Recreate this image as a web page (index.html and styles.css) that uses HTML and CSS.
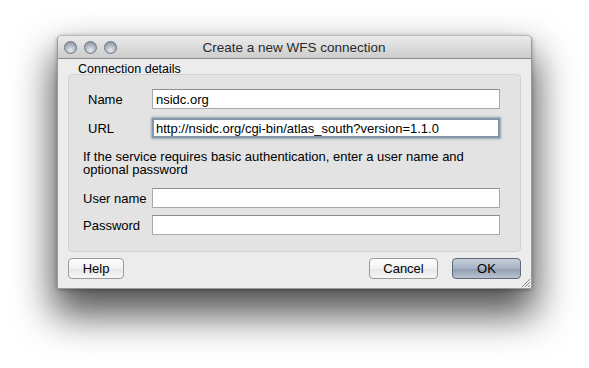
FILE: index.html
```html
<!DOCTYPE html>
<html lang="en">
<head>
  <meta charset="UTF-8" />
  <title>Create a new WFS connection</title>
  <link rel="stylesheet" href="styles.css">
</head>
<body>

  <div class="window">
    <div class="titlebar">
      <div class="lights">
        <span class="light"></span>
        <span class="light"></span>
        <span class="light"></span>
      </div>
      <div class="title">Create a new WFS connection</div>
    </div>

    <div class="content">
      <div class="legend">Connection details</div>
      <div class="group">
        <div class="form top">
          <label>Name</label>
          <div class="field">nsidc.org</div>
          <label>URL</label>
          <div class="field focus">http://nsidc.org/cgi-bin/atlas_south?version=1.1.0</div>
        </div>

        <p class="hint">If the service requires basic authentication, enter a user name and optional password</p>

        <div class="form bottom">
          <label>User name</label>
          <div class="field"></div>
          <label>Password</label>
          <div class="field"></div>
        </div>
      </div>

      <div class="buttons">
        <button class="btn">Help</button>
        <div class="spacer"></div>
        <button class="btn cancel">Cancel</button>
        <button class="btn default">OK</button>
      </div>
    </div>

    <svg class="grip" width="10" height="10" viewBox="0 0 10 10">
      <path d="M2 10 L10 2 M5 10 L10 5 M8 10 L10 8" stroke="#8a8a8a" stroke-width="1" fill="none"/>
    </svg>
  </div>

</body>
</html>
```

FILE: styles.css
```css
html {
  height: 100%;
  background: #ffffff;
}

body {
  margin: 0;
  min-height: 100%;
  box-sizing: border-box;
  font-family: "Liberation Sans", Arial, sans-serif;
  font-size: 13px;
  color: #000;
  padding: 35px 0 0 57px;
}

.window {
  position: relative;
  width: 475px;
  height: 254px;
  box-sizing: border-box;
  background: #ececec;
  border-radius: 5px 5px 2px 2px;
  border: 1px solid #9a9a9a;
  border-top-color: #b8b8b8;
  box-shadow: 0 22px 38px 4px rgba(0,0,0,0.68), 0 1px 4px rgba(0,0,0,0.3);
}

.titlebar {
  height: 22px;
  display: flex;
  align-items: center;
  border-bottom: 1px solid #8c8c8c;
  background: linear-gradient(#ebebeb, #cdcdcd);
  border-radius: 4px 4px 0 0;
}

.lights {
  display: flex;
  gap: 7px;
  padding-left: 6px;
}

.light {
  width: 13px;
  height: 13px;
  border-radius: 50%;
  box-sizing: border-box;
  border: 1px solid #6c7680;
  background: radial-gradient(circle at 50% 75%, #e6eaee 0%, #aab3bd 55%, #7c8792 100%);
}

.title {
  flex: 1;
  text-align: center;
  font-size: 13.5px;
  color: #2a2a2a;
  margin-right: 60px;
}

.content {
  padding: 0 10px;
}

.legend {
  font-size: 12.5px;
  padding: 3px 0 0 10px;
  height: 12px;
}

.group {
  height: 178px;
  box-sizing: border-box;
  background: #e3e3e3;
  border: 1px solid #d2d2d2;
  border-radius: 4px;
  padding: 14px 20px 0 14px;
}

.form {
  display: grid;
  grid-template-columns: 69px 348px;
  align-items: center;
}

.form.top {
  padding-left: 5px;
  grid-template-columns: 64px 348px;
  row-gap: 9px;
}

.form.bottom {
  row-gap: 7px;
}

.field {
  height: 20px;
  box-sizing: border-box;
  background: #fff;
  border: 1px solid #a9a9a9;
  border-top-color: #8e8e8e;
  padding: 2px 3px;
  line-height: 15px;
  white-space: nowrap;
}

.field.focus {
  border: 2px solid #8594a8;
  box-shadow: 0 0 2px 1px #98a6b8;
  padding: 1px 2px;
}

.hint {
  margin: 12px 0;
  line-height: 13px;
  width: 400px;
}

.buttons {
  display: flex;
  align-items: center;
  margin-top: 6px;
  gap: 14px;
}

.spacer {
  flex: 1;
}

.btn {
  font-family: "Liberation Sans", Arial, sans-serif;
  font-size: 13px;
  height: 21px;
  width: 56px;
  padding: 0;
  border: 1px solid #9b9b9b;
  border-radius: 4px;
  background: linear-gradient(#ffffff, #f1f1f1 50%, #e6e6e6 51%, #f6f6f6);
  color: #000;
}

.btn.cancel {
  width: 69px;
}

.btn.default {
  width: 69px;
  border-color: #5d6878;
  background: linear-gradient(#c6cedb, #a6b1c2 50%, #8f9bae 51%, #b9c3d1);
}

.grip {
  position: absolute;
  right: 1px;
  bottom: 1px;
}
```
